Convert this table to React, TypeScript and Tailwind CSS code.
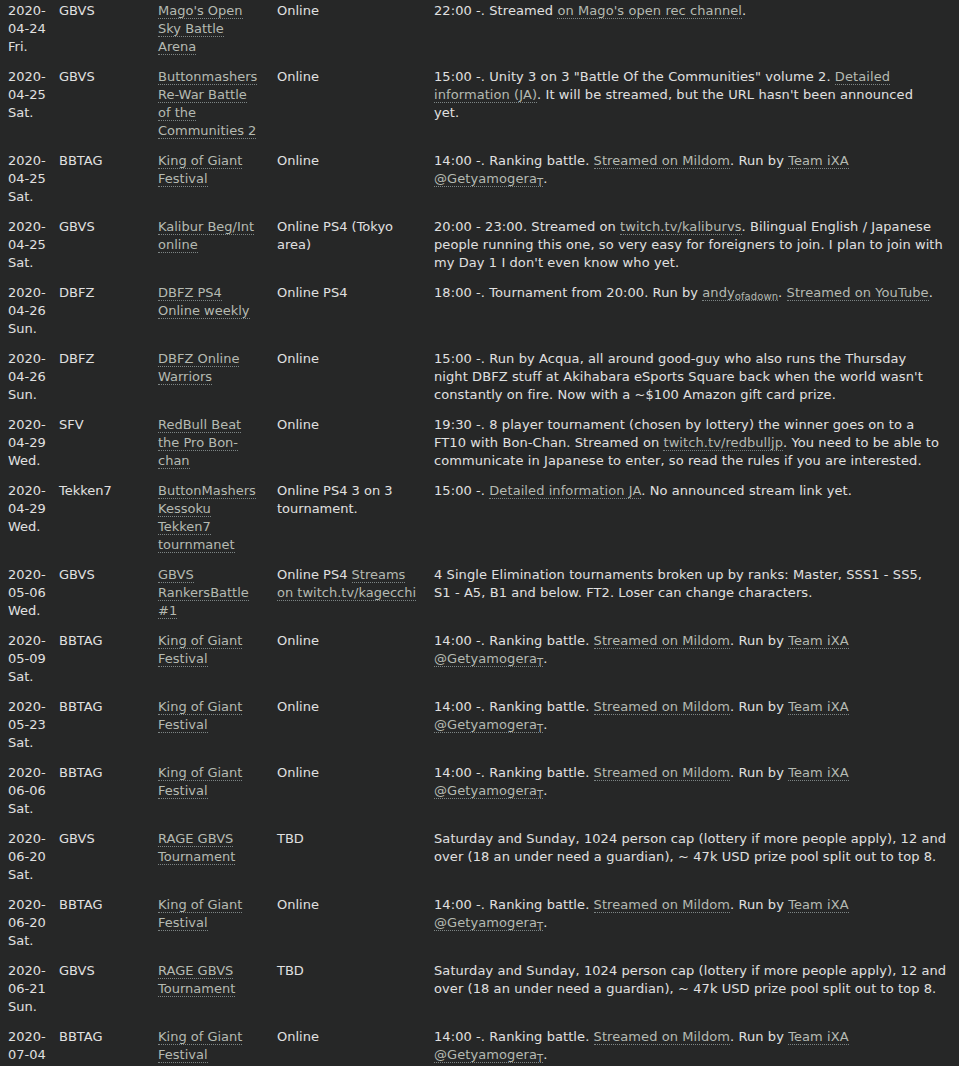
import React from 'react';

// '\n' inside a text marks where the line breaks in the schedule
type Part = string | { href: string; text: string; sub?: string };

interface Row {
  date: [string, string, string];
  game: string;
  event: string;
  venue: Part[];
  info: Part[];
}

const L = (text: string, sub?: string): Part => ({ href: '#', text, sub });

const kingInfo: Part[] = [
  '14:00 -. Ranking battle. ',
  L('Streamed on Mildom'),
  '. Run by ',
  L('Team iXA'),
  '\n',
  L('@Getyamogera', 'T'),
  '.',
];

const rageInfo: Part[] = [
  'Saturday and Sunday, 1024 person cap (lottery if more people apply), 12 and\nover (18 an under need a guardian), ~ 47k USD prize pool split out to top 8.',
];

const rows: Row[] = [
  {
    date: ['2020-', '04-24', 'Fri.'],
    game: 'GBVS',
    event: "Mago's Open Sky Battle Arena",
    venue: ['Online'],
    info: ['22:00 -. Streamed ', L("on Mago's open rec channel"), '.'],
  },
  {
    date: ['2020-', '04-25', 'Sat.'],
    game: 'GBVS',
    event: 'Buttonmashers Re-War Battle of the Communities 2',
    venue: ['Online'],
    info: [
      '15:00 -. Unity 3 on 3 "Battle Of the Communities" volume 2. ',
      L('Detailed\ninformation (JA)'),
      ". It will be streamed, but the URL hasn't been announced\nyet.",
    ],
  },
  { date: ['2020-', '04-25', 'Sat.'], game: 'BBTAG', event: 'King of Giant Festival', venue: ['Online'], info: kingInfo },
  {
    date: ['2020-', '04-25', 'Sat.'],
    game: 'GBVS',
    event: 'Kalibur Beg/Int online',
    venue: ['Online PS4 (Tokyo area)'],
    info: [
      '20:00 - 23:00. Streamed on ',
      L('twitch.tv/kaliburvs'),
      ". Bilingual English / Japanese\npeople running this one, so very easy for foreigners to join. I plan to join with\nmy Day 1 I don't even know who yet.",
    ],
  },
  {
    date: ['2020-', '04-26', 'Sun.'],
    game: 'DBFZ',
    event: 'DBFZ PS4 Online weekly',
    venue: ['Online PS4'],
    info: ['18:00 -. Tournament from 20:00. Run by ', L('andy', 'ofadown'), '. ', L('Streamed on YouTube'), '.'],
  },
  {
    date: ['2020-', '04-26', 'Sun.'],
    game: 'DBFZ',
    event: 'DBFZ Online Warriors',
    venue: ['Online'],
    info: [
      "15:00 -. Run by Acqua, all around good-guy who also runs the Thursday\nnight DBFZ stuff at Akihabara eSports Square back when the world wasn't\nconstantly on fire. Now with a ~$100 Amazon gift card prize.",
    ],
  },
  {
    date: ['2020-', '04-29', 'Wed.'],
    game: 'SFV',
    event: 'RedBull Beat the Pro Bon-chan',
    venue: ['Online'],
    info: [
      '19:30 -. 8 player tournament (chosen by lottery) the winner goes on to a\nFT10 with Bon-Chan. Streamed on ',
      L('twitch.tv/redbulljp'),
      '. You need to be able to\ncommunicate in Japanese to enter, so read the rules if you are interested.',
    ],
  },
  {
    date: ['2020-', '04-29', 'Wed.'],
    game: 'Tekken7',
    event: 'ButtonMashers Kessoku Tekken7 tournmanet',
    venue: ['Online PS4 3 on 3 tournament.'],
    info: ['15:00 -. ', L('Detailed information JA'), '. No announced stream link yet.'],
  },
  {
    date: ['2020-', '05-06', 'Wed.'],
    game: 'GBVS',
    event: 'GBVS RankersBattle #1',
    venue: ['Online PS4 ', L('Streams on twitch.tv/kagecchi')],
    info: [
      '4 Single Elimination tournaments broken up by ranks: Master, SSS1 - SS5,\nS1 - A5, B1 and below. FT2. Loser can change characters.',
    ],
  },
  { date: ['2020-', '05-09', 'Sat.'], game: 'BBTAG', event: 'King of Giant Festival', venue: ['Online'], info: kingInfo },
  { date: ['2020-', '05-23', 'Sat.'], game: 'BBTAG', event: 'King of Giant Festival', venue: ['Online'], info: kingInfo },
  { date: ['2020-', '06-06', 'Sat.'], game: 'BBTAG', event: 'King of Giant Festival', venue: ['Online'], info: kingInfo },
  { date: ['2020-', '06-20', 'Sat.'], game: 'GBVS', event: 'RAGE GBVS Tournament', venue: ['TBD'], info: rageInfo },
  { date: ['2020-', '06-20', 'Sat.'], game: 'BBTAG', event: 'King of Giant Festival', venue: ['Online'], info: kingInfo },
  { date: ['2020-', '06-21', 'Sun.'], game: 'GBVS', event: 'RAGE GBVS Tournament', venue: ['TBD'], info: rageInfo },
  { date: ['2020-', '07-04', 'Sat.'], game: 'BBTAG', event: 'King of Giant Festival', venue: ['Online'], info: kingInfo },
];

function Lines({ text }: { text: string }) {
  const lines = text.split('\n');
  return (
    <>
      {lines.map((line, i) => (
        <React.Fragment key={i}>
          {i > 0 && <br />}
          {line}
        </React.Fragment>
      ))}
    </>
  );
}

function Link({ text, sub }: { text: string; sub?: string }) {
  return (
    <a href="#" className="text-[#b5bab2] no-underline border-b border-dotted border-[#7d8585]">
      <Lines text={text} />
      {sub && <sub className="text-[10px] leading-none">{sub}</sub>}
    </a>
  );
}

function Parts({ parts }: { parts: Part[] }) {
  return (
    <>
      {parts.map((p, i) =>
        typeof p === 'string' ? <Lines key={i} text={p} /> : <Link key={i} text={p.text} sub={p.sub} />
      )}
    </>
  );
}

export default function App() {
  return (
    <div className="w-[959px] h-[1066px] overflow-hidden bg-[#262727] text-[#e0e0e0] font-['DejaVu_Sans',Verdana,sans-serif] text-[13px] leading-[18px]">
      <table className="table-fixed border-collapse w-full -mt-1">
        <colgroup>
          <col className="w-[51px]" />
          <col className="w-[99px]" />
          <col className="w-[119px]" />
          <col className="w-[157px]" />
          <col />
        </colgroup>
        <tbody>
          {rows.map((row, i) => (
            <tr key={i} className="align-top">
              <td className="pl-2 py-1.5">
                {row.date[0]}
                <br />
                {row.date[1]}
                <br />
                {row.date[2]}
              </td>
              <td className="pl-2 py-1.5">{row.game}</td>
              <td className="pl-2 pr-2 py-1.5">
                <Link text={row.event} />
              </td>
              <td className="pl-2 pr-2 py-1.5">
                <Parts parts={row.venue} />
              </td>
              <td className="pl-2 pr-1 py-1.5 tracking-[0.08px]">
                <Parts parts={row.info} />
              </td>
            </tr>
          ))}
        </tbody>
      </table>
    </div>
  );
}
